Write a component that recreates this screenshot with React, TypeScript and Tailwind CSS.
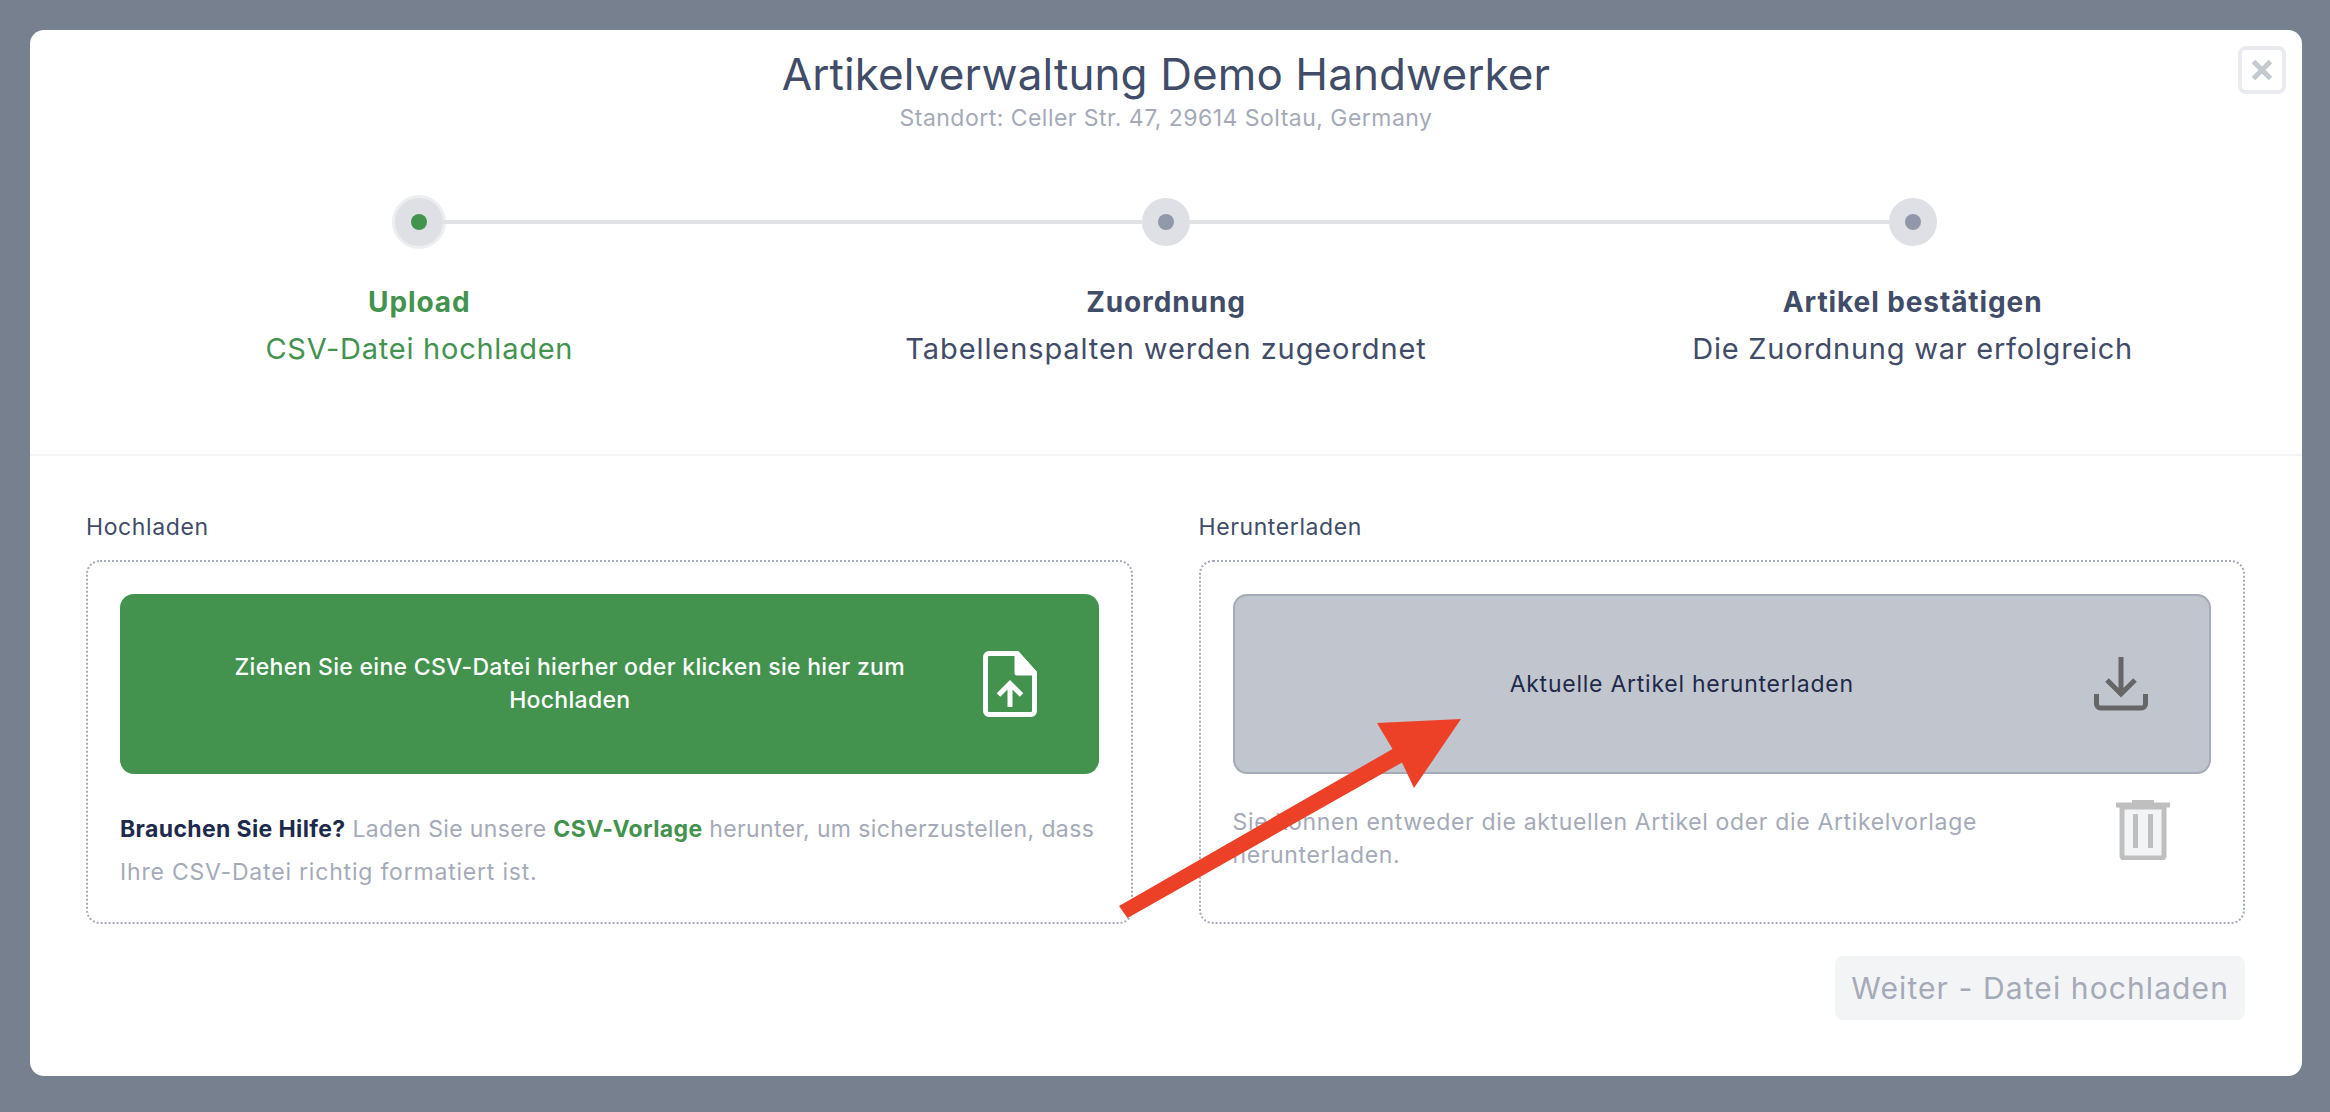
import React from 'react';

const font = "font-['Inter',sans-serif]";

const steps = [
  { title: 'Upload', sub: 'CSV-Datei hochladen', active: true, subClass: 'tracking-[0.75px]' },
  { title: 'Zuordnung', sub: 'Tabellenspalten werden zugeordnet', active: false, subClass: 'tracking-[0.9px]' },
  { title: 'Artikel bestätigen', sub: 'Die Zuordnung war erfolgreich', active: false, subClass: 'tracking-[0.75px]' },
];

const StepDot: React.FC<{ active?: boolean }> = ({ active }) => (
  <div className={`w-12 h-12 shrink-0 rounded-full bg-[#dfe0e5] flex items-center justify-center ${active ? 'ring-[3px] ring-[#eceef1]' : ''}`}>
    <div className={`w-4 h-4 rounded-full ${active ? 'bg-[#43934f]' : 'bg-[#9198a9]'}`} />
  </div>
);

const FileUpIcon = () => (
  <svg width="54" height="66" viewBox="0 0 54 66" fill="none" stroke="#fff" strokeWidth="5" className="shrink-0">
    <path d="M6 2.500h28L51.500 22v38a3.500 3.500 0 0 1-3.500 3.500H6A3.500 3.500 0 0 1 2.500 60V6A3.500 3.500 0 0 1 6 2.500z" />
    <path d="M34 2.500L51.500 22H34z" fill="#fff" strokeLinejoin="round" />
    <path d="M27 56V33M15.500 44L27 32.500 38.500 44" />
  </svg>
);

const DownloadIcon = () => (
  <svg width="54" height="54" viewBox="0 0 54 54" fill="none" stroke="#666" strokeWidth="5" className="shrink-0">
    <path d="M27 0v38M13 23l14 14 14-14" />
    <path d="M2.500 37v10a4 4 0 0 0 4 4h41a4 4 0 0 0 4-4V37" />
  </svg>
);

const TrashIcon = () => (
  <svg width="54" height="60" viewBox="0 0 54 60" className="shrink-0">
    <path d="M6 7h42v49a2 2 0 0 1-2 2H8a2 2 0 0 1-2-2z" fill="#f3f4f6" stroke="#bfbfbf" strokeWidth="5" />
    <rect x="0" y="2.500" width="54" height="5" fill="#bfbfbf" />
    <rect x="16" y="0" width="22" height="3" fill="#bfbfbf" />
    <rect x="17" y="14" width="5" height="34" fill="#bfbfbf" />
    <rect x="32" y="14" width="5" height="34" fill="#bfbfbf" />
  </svg>
);

export default function App() {
  return (
    <div className={`min-h-screen bg-[#76808f] pt-[30px] pl-[30px] pr-[28px] pb-[36px] ${font}`}>
      <div className="relative bg-white rounded-[14px] h-[1046px] pt-4">
        {/* Close */}
        <button className="absolute top-4 right-4 w-12 h-12 border-4 border-[#e9ebee] rounded-lg flex items-center justify-center">
          <svg width="20" height="20" viewBox="0 0 20 20" stroke="#c5c9d0" strokeWidth="5">
            <path d="M1.500 1.500l17 17M18.500 1.500l-17 17" />
          </svg>
        </button>

        {/* Header */}
        <h1 className="text-center text-[44px] leading-[56px] font-normal tracking-[0.1px] text-[#414c68]">
          Artikelverwaltung Demo Handwerker
        </h1>
        <p className="text-center text-[23px] leading-8 tracking-[0.47px] text-[#a5aab8]">
          Standort: Celler Str. 47, 29614 Soltau, Germany
        </p>

        {/* Stepper */}
        <div className="flex items-center px-[365px] mt-16">
          <StepDot active />
          <div className="flex-1 h-1 bg-[#e1e2e6]" />
          <StepDot />
          <div className="flex-1 h-1 bg-[#e1e2e6]" />
          <StepDot />
        </div>
        <div className="grid grid-cols-3 px-4 mt-[38px]">
          {steps.map((s) => (
            <div key={s.title} className={`text-center ${s.active ? 'text-[#43934f]' : 'text-[#414c68]'}`}>
              <div className="text-[28px] leading-9 font-bold tracking-[0.9px]">{s.title}</div>
              <div className={`text-[29px] leading-9 mt-[11px] ${s.subClass}`}>{s.sub}</div>
            </div>
          ))}
        </div>

        <div className="h-0.5 bg-[#f3f4f6] mt-[87px]" />

        {/* Upload / download */}
        <div className="grid grid-cols-2 gap-[66px] pl-14 pr-[57px] mt-[57px]">
          <div>
            <div className="text-[23px] leading-7 tracking-[0.6px] text-[#414c68]">Hochladen</div>
            <div className="mt-[19px] h-[364px] border-2 border-dotted border-[#a5aab8] rounded-[14px] px-8 pt-8">
              <div className="h-[180px] bg-[#43934f] rounded-[14px] flex items-center pl-[80px] pr-[62px] gap-[43px]">
                <p className="flex-1 text-center text-[23px] leading-[33px] tracking-[0.3px] font-medium text-white">
                  Ziehen Sie eine CSV-Datei hierher oder klicken sie hier zum Hochladen
                </p>
                <FileUpIcon />
              </div>
              <p className="mt-[34px] text-[23px] leading-[43px] tracking-[0.37px] text-[#a5aab8]">
                <strong className="font-bold text-[#1d2a4b]">Brauchen Sie Hilfe?</strong>
                <span> Laden Sie unsere </span>
                <span className="font-bold text-[#43934f]">CSV-Vorlage</span>
                <span> herunter, um sicherzustellen, dass</span>
                <br />
                <span className="tracking-[0.8px]">Ihre CSV-Datei richtig formatiert ist.</span>
              </p>
            </div>
          </div>
          <div>
            <div className="text-[23px] leading-7 tracking-[0.6px] text-[#414c68]">Herunterladen</div>
            <div className="mt-[19px] h-[364px] border-2 border-dotted border-[#a5aab8] rounded-[14px] px-8 pt-8">
              <div className="h-[180px] bg-[#c1c5ce] border-2 border-[#a5aab8] rounded-[14px] flex items-center pl-[35px] pr-[61px]">
                <p className="flex-1 text-center text-[23px] tracking-[0.75px] text-[#1d2a4b]">Aktuelle Artikel herunterladen</p>
                <DownloadIcon />
              </div>
              <div className="flex items-start justify-between mt-[26px] pr-[41px]">
                <p className="w-[770px] mt-[6px] text-[23px] leading-[33px] tracking-[0.65px] text-[#a5aab8]">
                  Sie können entweder die aktuellen Artikel oder die Artikelvorlage herunterladen.
                </p>
                <TrashIcon />
              </div>
            </div>
          </div>
        </div>

        <div className="flex justify-end pr-[57px] mt-8">
          <button className="h-16 px-4 rounded-lg bg-[#f3f4f6] text-[30px] tracking-[1.1px] text-[#a5aab8]">Weiter - Datei hochladen</button>
        </div>

        {/* Annotation arrow */}
        <svg className="absolute left-0 top-0 pointer-events-none" width="2272" height="1046" viewBox="30 30 2272 1046">
          <polygon points="1119,906 1127.500,918 1402,762.500 1414,788 1461,719 1377,723 1392.500,749" fill="#ec4126" />
        </svg>
      </div>
    </div>
  );
}
